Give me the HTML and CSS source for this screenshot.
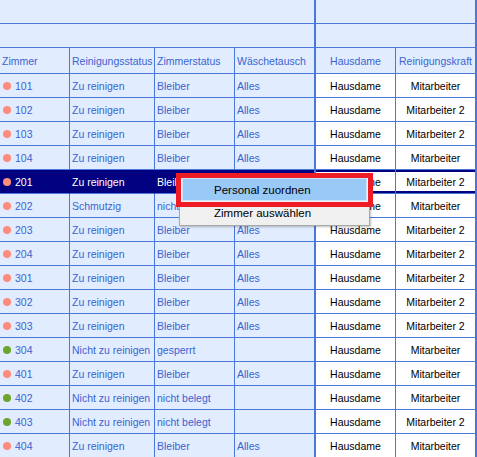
FILE: index.html
```html
<!DOCTYPE html>
<html>
<head>
<meta charset="utf-8">
<link rel="stylesheet" href="styles.css">
</head>
<body>
<div class="grid">
  <div class="band band-l"></div><div class="band band-r"></div>
  <div class="band band-l"></div><div class="band band-r"></div>

  <div class="c h">Zimmer</div><div class="c h">Reinigungsstatus</div><div class="c h">Zimmerstatus</div><div class="c h thick">Wäschetausch</div><div class="c h ctr">Hausdame</div><div class="c h ctr thick">Reinigungskraft</div>

  <div class="c"><span class="dot red"></span>101</div><div class="c">Zu reinigen</div><div class="c">Bleiber</div><div class="c thick">Alles</div><div class="c w">Hausdame</div><div class="c w thick">Mitarbeiter</div>
  <div class="c"><span class="dot red"></span>102</div><div class="c">Zu reinigen</div><div class="c">Bleiber</div><div class="c thick">Alles</div><div class="c w">Hausdame</div><div class="c w thick">Mitarbeiter 2</div>
  <div class="c"><span class="dot red"></span>103</div><div class="c">Zu reinigen</div><div class="c">Bleiber</div><div class="c thick">Alles</div><div class="c w">Hausdame</div><div class="c w thick">Mitarbeiter 2</div>
  <div class="c"><span class="dot red"></span>104</div><div class="c">Zu reinigen</div><div class="c">Bleiber</div><div class="c thick">Alles</div><div class="c w">Hausdame</div><div class="c w thick">Mitarbeiter</div>
  <div class="c sel"><span class="dot red"></span>201</div><div class="c sel">Zu reinigen</div><div class="c sel">Bleiber</div><div class="c sel thick">Alles</div><div class="c w selw">Hausdame</div><div class="c w selw thick">Mitarbeiter 2</div>
  <div class="c"><span class="dot red"></span>202</div><div class="c">Schmutzig</div><div class="c">nicht belegt</div><div class="c thick"></div><div class="c w">Hausdame</div><div class="c w thick">Mitarbeiter</div>
  <div class="c"><span class="dot red"></span>203</div><div class="c">Zu reinigen</div><div class="c">Bleiber</div><div class="c thick">Alles</div><div class="c w">Hausdame</div><div class="c w thick">Mitarbeiter 2</div>
  <div class="c"><span class="dot red"></span>204</div><div class="c">Zu reinigen</div><div class="c">Bleiber</div><div class="c thick">Alles</div><div class="c w">Hausdame</div><div class="c w thick">Mitarbeiter 2</div>
  <div class="c"><span class="dot red"></span>301</div><div class="c">Zu reinigen</div><div class="c">Bleiber</div><div class="c thick">Alles</div><div class="c w">Hausdame</div><div class="c w thick">Mitarbeiter 2</div>
  <div class="c"><span class="dot red"></span>302</div><div class="c">Zu reinigen</div><div class="c">Bleiber</div><div class="c thick">Alles</div><div class="c w">Hausdame</div><div class="c w thick">Mitarbeiter 2</div>
  <div class="c"><span class="dot red"></span>303</div><div class="c">Zu reinigen</div><div class="c">Bleiber</div><div class="c thick">Alles</div><div class="c w">Hausdame</div><div class="c w thick">Mitarbeiter 2</div>
  <div class="c"><span class="dot green"></span>304</div><div class="c">Nicht zu reinigen</div><div class="c">gesperrt</div><div class="c thick"></div><div class="c w">Hausdame</div><div class="c w thick">Mitarbeiter</div>
  <div class="c"><span class="dot red"></span>401</div><div class="c">Zu reinigen</div><div class="c">Bleiber</div><div class="c thick">Alles</div><div class="c w">Hausdame</div><div class="c w thick">Mitarbeiter</div>
  <div class="c"><span class="dot green"></span>402</div><div class="c">Nicht zu reinigen</div><div class="c">nicht belegt</div><div class="c thick"></div><div class="c w">Hausdame</div><div class="c w thick">Mitarbeiter</div>
  <div class="c"><span class="dot green"></span>403</div><div class="c">Nicht zu reinigen</div><div class="c">nicht belegt</div><div class="c thick"></div><div class="c w">Hausdame</div><div class="c w thick">Mitarbeiter 2</div>
  <div class="c"><span class="dot red"></span>404</div><div class="c">Zu reinigen</div><div class="c">Bleiber</div><div class="c thick">Alles</div><div class="c w">Hausdame</div><div class="c w thick">Mitarbeiter</div>
</div>

<div class="menu">
  <div class="item active">Personal zuordnen</div>
  <div class="item">Zimmer auswählen</div>
</div>
<div class="mark"></div>
</body>
</html>
```
FILE: styles.css
```css
html, body {
  margin: 0;
  padding: 0;
  background: #e1edfe;
  overflow: hidden;
}
body {
  font-family: "Liberation Sans", Arial, sans-serif;
  font-size: 10.5px;
  color: #3b63d1;
  width: 477px;
  height: 457px;
  position: relative;
}
.grid {
  display: grid;
  grid-template-columns: 70px 85px 80px 81px 80px 81px;
  grid-template-rows: 24px 24px 26px;
  grid-auto-rows: 24px;
}
.band {
  box-sizing: border-box;
  border-bottom: 1px solid #4a77d8;
  border-right: 2px solid #4a77d8;
}
.band-l { grid-column: span 4; }
.band-r { grid-column: span 2; }
.c {
  box-sizing: border-box;
  border-right: 1px solid #4a77d8;
  border-bottom: 1px solid #4a77d8;
  display: flex;
  align-items: center;
  padding-left: 2px;
  white-space: nowrap;
  overflow: hidden;
}
.c.thick { border-right-width: 2px; }
.ctr { justify-content: center; padding-left: 0; }
.w {
  background: #ffffff;
  color: #000000;
  justify-content: center;
  padding-left: 0;
}
.dot {
  width: 8px;
  height: 8px;
  border-radius: 50%;
  margin-left: 1px;
  margin-right: 4px;
  flex: none;
}
.dot.red { background: #ff8c7a; }
.dot.green { background: #6ca52a; }
.sel {
  background: #000080;
  color: #ffffff;
  border-right-color: #000080;
}
.sel.thick { border-right-color: #4a77d8; }
.selw {
  box-shadow: inset 0 2px 0 #000080, inset 0 -2px 0 #000080;
}
.menu {
  position: absolute;
  left: 179px;
  top: 175px;
  width: 191px;
  height: 51px;
  box-sizing: border-box;
  background: #f0f0f0;
  border: 1px solid #a8a8a8;
  box-shadow: 1px 1px 2px rgba(0,0,0,0.25);
  padding: 2px 2px;
  font-size: 11.5px;
  color: #000;
}
.item {
  height: 23px;
  box-sizing: border-box;
  display: flex;
  align-items: center;
  padding-left: 32px;
}
.item.active {
  background: #99c9f6;
  border: 1px solid #cde4fb;
  padding-left: 31px;
}
.mark {
  position: absolute;
  left: 176px;
  top: 173px;
  width: 197px;
  height: 34px;
  box-sizing: border-box;
  border: 5px solid #ee1c25;
}
```
